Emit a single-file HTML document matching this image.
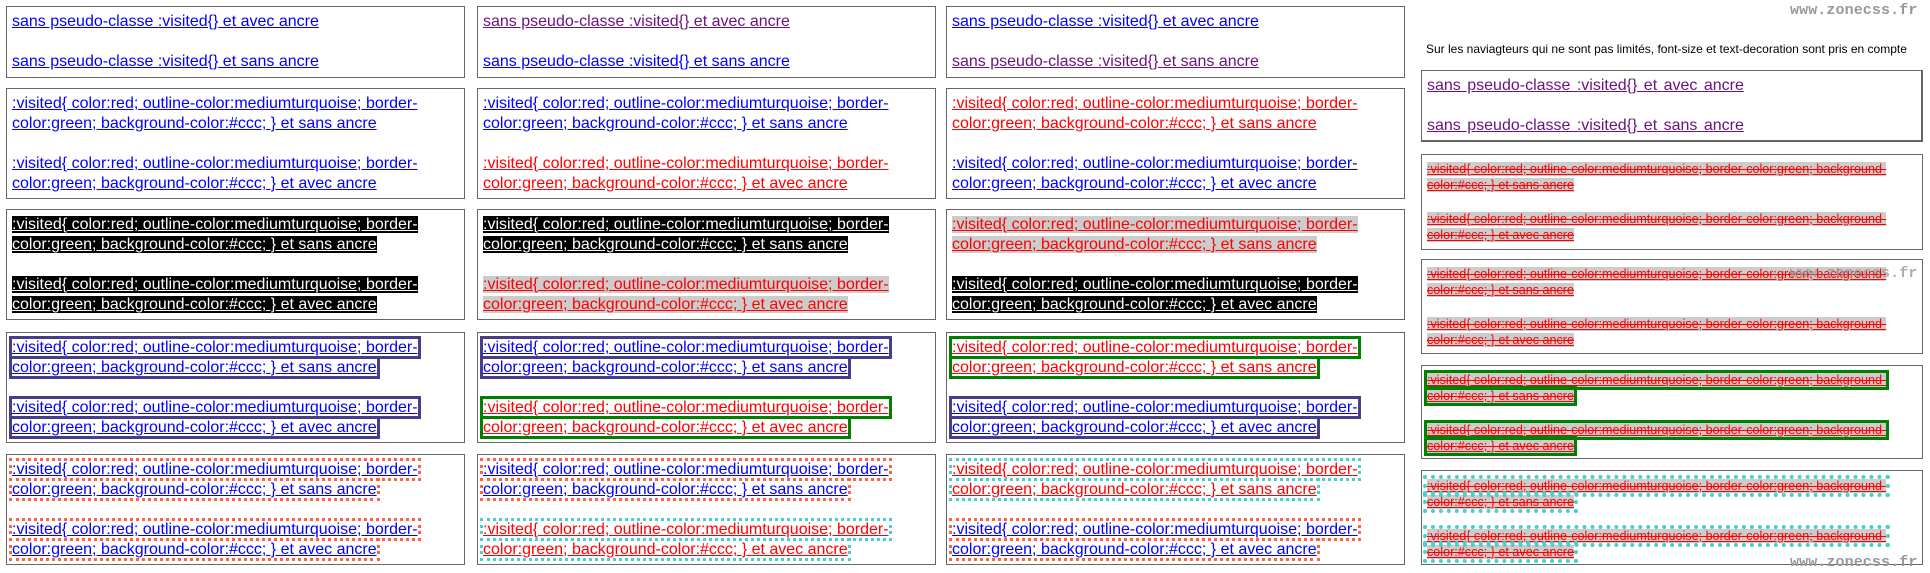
<!DOCTYPE html>
<html><head><meta charset="utf-8"><style>
*{margin:0;padding:0;box-sizing:border-box}
body{width:1930px;height:573px;background:#fff;position:relative;overflow:hidden;font-family:"Liberation Sans",Arial,sans-serif;font-size:16px;line-height:20px}
.b{position:absolute;border:1px solid #666;padding:5px 5px 0 5px;width:459px}
.b p{margin:0 0 20px 0;white-space:nowrap}
.r1{top:6px;height:72px}.r2{top:88px;height:111px}.r3{top:209px;height:111px}.r4{top:332px;height:111px}.r5{top:454px;height:111px}
.c1{left:6px}.c2{left:477px}.c3{left:946px}
span{text-decoration:underline}
.bl{color:#00f}.rd{color:#f00}.pu{color:#6b1480}
.bk{background:#000;color:#fff}.gr{background:#ccc;color:#f00}
.o1{outline:3px solid #483d8b;color:#00f}
.o2{outline:3px solid #008000;color:#f00}
.d1{outline:3px dotted #ff6347;color:#00f}
.d1r{outline:3px dotted #ff6347;color:#f00}
.d2{outline:3px dotted #48d1cc;color:#f00}
.c4{left:1421px;width:502px}
.s{font-size:12.6px;line-height:16px}
.s p{margin-bottom:18px}
.s span{text-decoration:underline line-through;background:#ccc;color:#f00}
.s span.g{outline:3px solid #008000}
.s span.t{outline:4px dotted #48d1cc}
.wm{position:absolute;font-family:"Liberation Mono",monospace;font-size:15px;color:#999;font-weight:bold;letter-spacing:0.1px}
</style></head><body>
<div class="wm" style="left:1790px;top:1px">www.zonecss.fr</div>
<div style="position:absolute;left:1426px;top:42px;font-size:12px;line-height:14px;color:#000">Sur les naviagteurs qui ne sont pas limités, font-size et text-decoration sont pris en compte</div>

<div class="b r1 c1"><p><span class="bl">sans pseudo-classe :visited{} et avec ancre</span></p><p><span class="bl">sans pseudo-classe :visited{} et sans ancre</span></p></div>
<div class="b r1 c2"><p><span class="pu">sans pseudo-classe :visited{} et avec ancre</span></p><p><span class="bl">sans pseudo-classe :visited{} et sans ancre</span></p></div>
<div class="b r1 c3"><p><span class="bl">sans pseudo-classe :visited{} et avec ancre</span></p><p><span class="pu">sans pseudo-classe :visited{} et sans ancre</span></p></div>

<div class="b r2 c1"><p><span class="bl">:visited{ color:red; outline-color:mediumturquoise; border-<br>color:green; background-color:#ccc; } et sans ancre</span></p><p><span class="bl">:visited{ color:red; outline-color:mediumturquoise; border-<br>color:green; background-color:#ccc; } et avec ancre</span></p></div>
<div class="b r2 c2"><p><span class="bl">:visited{ color:red; outline-color:mediumturquoise; border-<br>color:green; background-color:#ccc; } et sans ancre</span></p><p><span class="rd">:visited{ color:red; outline-color:mediumturquoise; border-<br>color:green; background-color:#ccc; } et avec ancre</span></p></div>
<div class="b r2 c3"><p><span class="rd">:visited{ color:red; outline-color:mediumturquoise; border-<br>color:green; background-color:#ccc; } et sans ancre</span></p><p><span class="bl">:visited{ color:red; outline-color:mediumturquoise; border-<br>color:green; background-color:#ccc; } et avec ancre</span></p></div>

<div class="b r3 c1"><p><span class="bk">:visited{ color:red; outline-color:mediumturquoise; border-<br>color:green; background-color:#ccc; } et sans ancre</span></p><p><span class="bk">:visited{ color:red; outline-color:mediumturquoise; border-<br>color:green; background-color:#ccc; } et avec ancre</span></p></div>
<div class="b r3 c2"><p><span class="bk">:visited{ color:red; outline-color:mediumturquoise; border-<br>color:green; background-color:#ccc; } et sans ancre</span></p><p><span class="gr">:visited{ color:red; outline-color:mediumturquoise; border-<br>color:green; background-color:#ccc; } et avec ancre</span></p></div>
<div class="b r3 c3"><p><span class="gr">:visited{ color:red; outline-color:mediumturquoise; border-<br>color:green; background-color:#ccc; } et sans ancre</span></p><p><span class="bk">:visited{ color:red; outline-color:mediumturquoise; border-<br>color:green; background-color:#ccc; } et avec ancre</span></p></div>

<div class="b r4 c1"><p><span class="o1">:visited{ color:red; outline-color:mediumturquoise; border-</span><br><span class="o1">color:green; background-color:#ccc; } et sans ancre</span></p><p><span class="o1">:visited{ color:red; outline-color:mediumturquoise; border-</span><br><span class="o1">color:green; background-color:#ccc; } et avec ancre</span></p></div>
<div class="b r4 c2"><p><span class="o1">:visited{ color:red; outline-color:mediumturquoise; border-</span><br><span class="o1">color:green; background-color:#ccc; } et sans ancre</span></p><p><span class="o2">:visited{ color:red; outline-color:mediumturquoise; border-</span><br><span class="o2">color:green; background-color:#ccc; } et avec ancre</span></p></div>
<div class="b r4 c3"><p><span class="o2">:visited{ color:red; outline-color:mediumturquoise; border-</span><br><span class="o2">color:green; background-color:#ccc; } et sans ancre</span></p><p><span class="o1">:visited{ color:red; outline-color:mediumturquoise; border-</span><br><span class="o1">color:green; background-color:#ccc; } et avec ancre</span></p></div>

<div class="b r5 c1"><p><span class="d1">:visited{ color:red; outline-color:mediumturquoise; border-</span><br><span class="d1">color:green; background-color:#ccc; } et sans ancre</span></p><p><span class="d1">:visited{ color:red; outline-color:mediumturquoise; border-</span><br><span class="d1">color:green; background-color:#ccc; } et avec ancre</span></p></div>
<div class="b r5 c2"><p><span class="d1">:visited{ color:red; outline-color:mediumturquoise; border-</span><br><span class="d1">color:green; background-color:#ccc; } et sans ancre</span></p><p><span class="d2">:visited{ color:red; outline-color:mediumturquoise; border-</span><br><span class="d2">color:green; background-color:#ccc; } et avec ancre</span></p></div>
<div class="b r5 c3"><p><span class="d2">:visited{ color:red; outline-color:mediumturquoise; border-</span><br><span class="d2">color:green; background-color:#ccc; } et sans ancre</span></p><p><span class="d1">:visited{ color:red; outline-color:mediumturquoise; border-</span><br><span class="d1">color:green; background-color:#ccc; } et avec ancre</span></p></div>

<div class="b c4" style="top:70px;height:72px;border-width:1px 2px 2px 1px"><p style="word-spacing:2px"><span class="pu">sans pseudo-classe :visited{} et avec ancre</span></p><p style="word-spacing:2px"><span class="pu">sans pseudo-classe :visited{} et sans ancre</span></p></div>

<div class="b c4 s" style="top:154px;height:96px;padding-top:6px"><p><span>:visited{ color:red; outline-color:mediumturquoise; border-color:green; background-</span><br><span>color:#ccc; } et sans ancre</span></p><p><span>:visited{ color:red; outline-color:mediumturquoise; border-color:green; background-</span><br><span>color:#ccc; } et avec ancre</span></p></div>
<div class="b c4 s" style="top:259px;height:95px;padding-top:6px"><p><span>:visited{ color:red; outline-color:mediumturquoise; border-color:green; background-</span><br><span>color:#ccc; } et sans ancre</span></p><p><span>:visited{ color:red; outline-color:mediumturquoise; border-color:green; background-</span><br><span>color:#ccc; } et avec ancre</span></p></div>
<div class="b c4 s" style="top:365px;height:94px;padding-top:6px"><p><span class="g">:visited{ color:red; outline-color:mediumturquoise; border-color:green; background-</span><br><span class="g">color:#ccc; } et sans ancre</span></p><p><span class="g">:visited{ color:red; outline-color:mediumturquoise; border-color:green; background-</span><br><span class="g">color:#ccc; } et avec ancre</span></p></div>
<div class="b c4 s" style="top:470px;height:95px;padding-top:7px"><p><span class="t">:visited{ color:red; outline-color:mediumturquoise; border-color:green; background-</span><br><span class="t">color:#ccc; } et sans ancre</span></p><p><span class="t">:visited{ color:red; outline-color:mediumturquoise; border-color:green; background-</span><br><span class="t">color:#ccc; } et avec ancre</span></p></div>

<div class="wm" style="left:1790px;top:264px;opacity:0.8">www.zonecss.fr</div>
<div class="wm" style="left:1790px;top:553px">www.zonecss.fr</div>
</body></html>
